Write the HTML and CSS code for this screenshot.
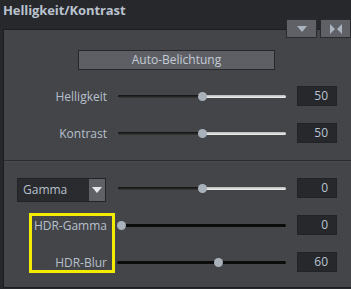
FILE: index.html
```html
<!DOCTYPE html>
<html lang="de">
<head>
    <meta charset="UTF-8">
    <title>Helligkeit/Kontrast</title>
    <link rel="stylesheet" href="styles.css">
</head>
<body>
    <div class="header">
        <div class="title">Helligkeit/Kontrast</div>
        <div class="header-buttons">
            <div class="head-btn">
                <svg width="10" height="6" viewBox="0 0 10 6"><polygon points="0,0 10,0 5,6" fill="#aab4c0"/></svg>
            </div>
            <div class="head-btn">
                <svg width="12" height="10" viewBox="0 0 12 10"><polygon points="0,0 5,5 0,10" fill="#aab4c0"/><polygon points="12,0 7,5 12,10" fill="#aab4c0"/></svg>
            </div>
        </div>
    </div>

    <div class="panel">
        <div class="auto-row">
            <div class="auto-button">Auto-Belichtung</div>
        </div>

        <div class="row row-first">
            <div class="label">Helligkeit</div>
            <div class="slider">
                <div class="track-left" style="width: 85px"></div>
                <div class="thumb" style="left: 85px"></div>
            </div>
            <div class="value">50</div>
        </div>
        <div class="row row-second">
            <div class="label">Kontrast</div>
            <div class="slider">
                <div class="track-left" style="width: 85px"></div>
                <div class="thumb" style="left: 85px"></div>
            </div>
            <div class="value">50</div>
        </div>

        <div class="separator"></div>

        <div class="row row-gamma">
            <div class="label">
                <div class="dropdown">
                    <div class="dropdown-text">Gamma</div>
                    <div class="dropdown-arrow">
                        <svg width="10" height="6" viewBox="0 0 10 6"><polygon points="0,0 10,0 5,6" fill="#e4e8ee"/></svg>
                    </div>
                </div>
            </div>
            <div class="slider">
                <div class="track-left" style="width: 85px"></div>
                <div class="thumb" style="left: 85px"></div>
            </div>
            <div class="value">0</div>
        </div>

        <div class="hdr-group">
            <div class="row row-hdr">
                <div class="label">HDR-Gamma</div>
                <div class="slider dark">
                    <div class="thumb" style="left: 4px"></div>
                </div>
                <div class="value">0</div>
            </div>
            <div class="row row-blur">
                <div class="label">HDR-Blur</div>
                <div class="slider dark">
                    <div class="thumb" style="left: 101px"></div>
                </div>
                <div class="value">60</div>
            </div>
            <div class="highlight"></div>
        </div>
    </div>
</body>
</html>
```

FILE: styles.css
```css
body {
    margin: 0;
    padding: 0;
    width: 351px;
    height: 289px;
    overflow: hidden;
    background-color: #27282c;
    font-family: "Open Sans", "Noto Sans", sans-serif;
    color: #b6c0cc;
}
.header {
    position: relative;
    height: 29px;
}
.title {
    padding: 1px 0 0 3px;
    font-size: 13px;
    font-weight: bold;
    color: #b9c2ce;
    letter-spacing: -0.1px;
}
.header-buttons {
    position: absolute;
    top: 19px;
    right: 0;
    display: flex;
    gap: 3px;
    z-index: 5;
}
.head-btn {
    width: 29px;
    height: 17px;
    background-color: #5f6166;
    border: 1px solid #2a2b2f;
    display: flex;
    justify-content: center;
    align-items: center;
}
.panel {
    margin-left: 3px;
    height: 257px;
    background-color: #444549;
    border-top: 1px solid #1d1e21;
    border-left: 1px solid #1d1e21;
    border-bottom: 1px solid #1d1e21;
}
.auto-row {
    padding-top: 20px;
    padding-left: 74px;
}
.auto-button {
    width: 195px;
    height: 18px;
    background-color: #5d5f64;
    border: 1px solid #26272a;
    text-align: center;
    font-size: 12px;
    line-height: 18px;
    color: #c3cbd6;
}
.row {
    display: flex;
    align-items: center;
    height: 20px;
}
.row-first {
    margin-top: 16px;
}
.row-second {
    margin-top: 17px;
}
.label {
    width: 103px;
    display: flex;
    justify-content: flex-end;
    font-size: 12px;
    color: #b6c0cc;
}
.slider {
    position: relative;
    margin-left: 10px;
    width: 169px;
    height: 3px;
    border-radius: 2px;
    background: linear-gradient(#b9b9b9, #f2f2f2);
}
.slider.dark {
    background: #0b0b0c;
}
.track-left {
    height: 3px;
    border-radius: 2px 0 0 2px;
    background: linear-gradient(#111111, #3a3a3a);
}
.thumb {
    position: absolute;
    top: -3px;
    width: 9px;
    height: 9px;
    margin-left: -4px;
    border-radius: 50%;
    background-color: #a9b1bb;
}
.value {
    margin-left: 11px;
    width: 30px;
    height: 18px;
    padding-right: 8px;
    background-color: #27282c;
    border: 1px solid #222326;
    text-align: right;
    font-size: 12px;
    line-height: 18px;
    color: #b9c4d2;
}
.separator {
    margin-top: 17px;
    height: 1px;
    background-color: #2a2b2e;
    border-bottom: 1px solid #4a4b50;
}
.row-gamma {
    margin-top: 16px;
}
.dropdown {
    margin-right: 1px;
    width: 89px;
    height: 24px;
    margin-top: 4px;
    display: flex;
    background-color: #2a2b2f;
    box-sizing: border-box;
    border: 1px solid #222326;
}
.dropdown-text {
    flex: 1;
    padding-left: 5px;
    font-size: 12px;
    line-height: 22px;
    color: #b6c0cc;
}
.dropdown-arrow {
    width: 16px;
    background-color: #5f6166;
    display: flex;
    justify-content: center;
    align-items: center;
}
.hdr-group {
    position: relative;
    padding-top: 17px;
}
.row-blur {
    margin-top: 17px;
}
.highlight {
    position: absolute;
    left: 25px;
    top: 15px;
    width: 80px;
    height: 54px;
    border: 3px solid #f4ec00;
}
```
